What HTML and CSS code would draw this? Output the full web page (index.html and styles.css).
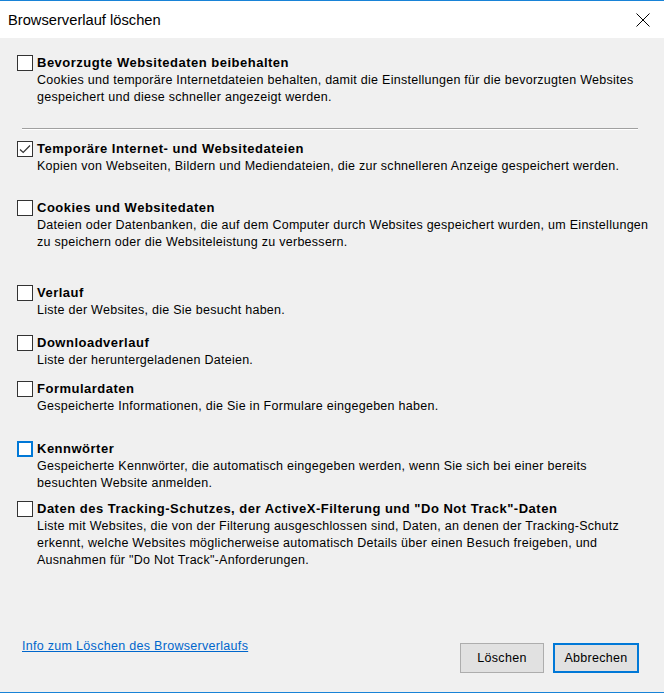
FILE: index.html
```html
<!DOCTYPE html>
<html lang="de">
<head>
<meta charset="utf-8">
<title>Browserverlauf löschen</title>
<link rel="stylesheet" href="styles.css">
</head>
<body>
<div class="window">
  <header class="titlebar">
    <span class="title">Browserverlauf löschen</span>
    <svg class="close" width="14" height="14" viewBox="0 0 14 14"><path d="M0.5 0.5 L13.5 13.5 M13.5 0.5 L0.5 13.5" stroke="#000" stroke-width="1" fill="none"/></svg>
  </header>
  <main class="content">
    <div class="item m1">
      <span class="cb"></span>
      <div class="label">Bevorzugte Websitedaten beibehalten</div>
      <div class="desc">Cookies und temporäre Internetdateien behalten, damit die Einstellungen für die bevorzugten Websites<br>gespeichert und diese schneller angezeigt werden.</div>
    </div>
    <div class="sep"></div>
    <div class="item m2">
      <span class="cb checked"><svg width="12" height="12" viewBox="0 0 12 12"><path d="M1 6.5 L4.2 9.5 L11 2.5" stroke="#333" stroke-width="1.2" fill="none"/></svg></span>
      <div class="label">Temporäre Internet- und Websitedateien</div>
      <div class="desc">Kopien von Webseiten, Bildern und Mediendateien, die zur schnelleren Anzeige gespeichert werden.</div>
    </div>
    <div class="item m3">
      <span class="cb"></span>
      <div class="label">Cookies und Websitedaten</div>
      <div class="desc">Dateien oder Datenbanken, die auf dem Computer durch Websites gespeichert wurden, um Einstellungen<br>zu speichern oder die Websiteleistung zu verbessern.</div>
    </div>
    <div class="item m4">
      <span class="cb"></span>
      <div class="label">Verlauf</div>
      <div class="desc">Liste der Websites, die Sie besucht haben.</div>
    </div>
    <div class="item m5">
      <span class="cb"></span>
      <div class="label">Downloadverlauf</div>
      <div class="desc">Liste der heruntergeladenen Dateien.</div>
    </div>
    <div class="item m6">
      <span class="cb"></span>
      <div class="label">Formulardaten</div>
      <div class="desc">Gespeicherte Informationen, die Sie in Formulare eingegeben haben.</div>
    </div>
    <div class="item m7">
      <span class="cb focus"></span>
      <div class="label">Kennwörter</div>
      <div class="desc">Gespeicherte Kennwörter, die automatisch eingegeben werden, wenn Sie sich bei einer bereits<br>besuchten Website anmelden.</div>
    </div>
    <div class="item m8">
      <span class="cb"></span>
      <div class="label">Daten des Tracking-Schutzes, der ActiveX-Filterung und "Do Not Track"-Daten</div>
      <div class="desc">Liste mit Websites, die von der Filterung ausgeschlossen sind, Daten, an denen der Tracking-Schutz<br>erkennt, welche Websites möglicherweise automatisch Details über einen Besuch freigeben, und<br>Ausnahmen für "Do Not Track"-Anforderungen.</div>
    </div>
  </main>
  <footer class="footer">
    <a class="info" href="#">Info zum Löschen des Browserverlaufs</a>
    <div class="buttons">
      <button class="btn">Löschen</button>
      <button class="btn primary">Abbrechen</button>
    </div>
  </footer>
</div>
</body>
</html>
```

FILE: styles.css
```css
* { box-sizing: border-box; }
html, body { margin: 0; padding: 0; }
body {
  width: 664px;
  height: 693px;
  font-family: "Liberation Sans", Arial, sans-serif;
  color: #000;
  background: #f0f0f0;
}
.window {
  height: 693px;
  display: flex;
  flex-direction: column;
  border-top: 1px solid #1883d7;
  border-bottom: 1px solid #1883d7;
  background: #f0f0f0;
}
.titlebar {
  height: 37px;
  background: #fff;
  display: flex;
  align-items: center;
  justify-content: space-between;
  padding: 0 14px 0 8px;
}
.title {
  font-size: 14.7px;
  margin-top: 1px;
}
.close { display: block; margin-top: 1px; }
.content {
  flex: 1;
  padding: 0 10px 0 17px;
}
.item {
  display: grid;
  grid-template-columns: 16px 1fr;
  column-gap: 4px;
}
.cb {
  grid-row: 1;
  grid-column: 1;
  width: 16px;
  height: 16px;
  border: 1px solid #333;
  background: #fff;
  margin-top: 1px;
  display: flex;
  align-items: center;
  justify-content: center;
}
.cb.checked { border-color: #333; }
.cb.focus { border: 2px solid #0078d7; }
.label {
  grid-row: 1;
  grid-column: 2;
  font-weight: bold;
  font-size: 13px;
  letter-spacing: 0.5px;
  line-height: 18px;
}
.desc {
  grid-column: 2;
  font-size: 12.5px;
  letter-spacing: 0.27px;
  line-height: 17px;
  white-space: nowrap;
}
.m1 { margin-top: 16px; }
.sep {
  margin: 22px 16px 0 5px;
  height: 2px;
  border-top: 1px solid #a0a0a0;
  border-bottom: 1px solid #fff;
}
.m2 { margin-top: 10px; }
.m3 { margin-top: 24px; }
.m4 { margin-top: 33px; }
.m5 { margin-top: 15px; }
.m6 { margin-top: 11px; }
.m7 { margin-top: 25px; }
.m8 { margin-top: 8px; }
.footer {
  height: 82px;
  display: flex;
  justify-content: space-between;
  align-items: flex-start;
  padding: 0 25px 0 22px;
}
.info {
  margin-top: 29px;
  font-size: 12.5px;
  letter-spacing: 0.3px;
  color: #0066cc;
  text-decoration: underline;
}
.buttons {
  margin-top: 33px;
  display: flex;
  gap: 9px;
}
.btn {
  height: 30px;
  width: 84px;
  background: #e1e1e1;
  border: 1px solid #adadad;
  font-family: "Liberation Sans", Arial, sans-serif;
  font-size: 12.5px;
  letter-spacing: 0.3px;
  color: #000;
  padding: 0;
}
.btn.primary {
  width: 86px;
  border: 2px solid #0078d7;
}
```
